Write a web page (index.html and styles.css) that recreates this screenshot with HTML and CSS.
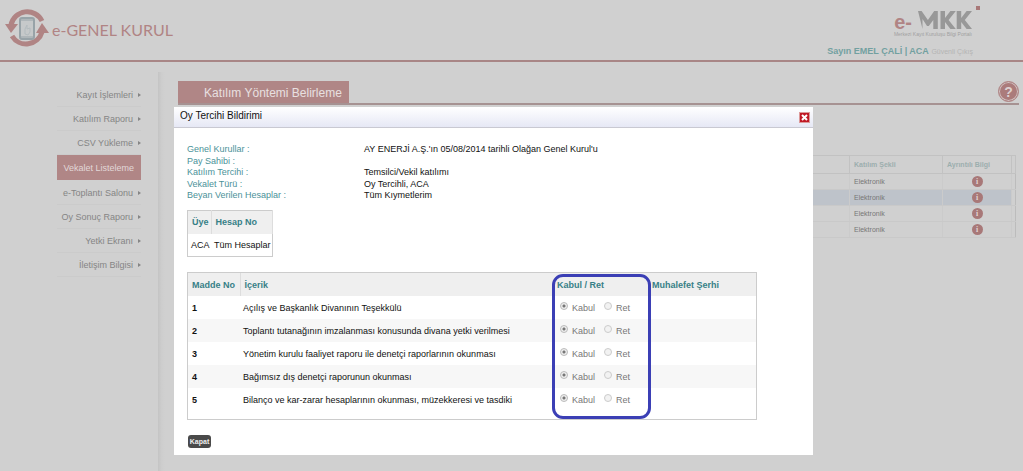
FILE: index.html
```html
<!DOCTYPE html>
<html lang="tr">
<head>
<meta charset="utf-8">
<title>e-Genel Kurul</title>
<link rel="stylesheet" href="styles.css">
</head>
<body>
<header class="topbar">
  <div class="brand">
    <svg class="brand-icon" viewBox="0 0 44 40" aria-hidden="true">
      <path d="M6 17A16.500 16.500 0 0 1 37 13" fill="none" stroke="#b08484" stroke-width="5"/>
      <path d="M0 16H13L6 25Z" fill="#b08484"/>
      <path d="M37 24A16.500 16.500 0 0 1 7 28" fill="none" stroke="#b08484" stroke-width="5"/>
      <path d="M31 25H44L37 15Z" fill="#b08484"/>
      <rect x="15" y="10" width="14" height="21" rx="2" fill="#c6c9ca" stroke="#98a3a8" stroke-width="2"/>
      <path d="M16 12H28M16 29H28" stroke="#98a3a8"/>
      <path d="M20 26V21L22 17V21L25 20V24L23 27Z" fill="none" stroke="#b3bbbe"/>
    </svg>
    <span class="brand-name">e-GENEL KURUL</span>
  </div>
  <div class="account">
    <div class="portal">
      <span class="portal-e">e-</span>
      <div class="portal-mark">
        <svg class="portal-logo" viewBox="0 2 60 18" preserveAspectRatio="none" role="img" aria-label="MKK">
          <path d="M0 2L4 2L11 11L18 2H22V20H17V11L12 17H10L5 10V20Z" fill="#989898"/>
          <path d="M25 2H30V9L36 2H42L34 11L42 20H36L30 13V20H25ZM43 2H48V9L54 2H60L52 11L60 20H54L48 13V20H43Z" fill="#989898"/>
        </svg>
        <span class="portal-sub">Merkezi Kayıt Kuruluşu Bilgi Portalı</span>
      </div>
      <span class="portal-dot"></span>
    </div>
    <div class="user"><b>Sayın EMEL ÇALİ | ACA</b> <a class="logout" href="#">Güvenli Çıkış</a></div>
  </div>
</header>
<div class="page">
  <nav class="menu">
    <a class="menu-item arrow" href="#">Kayıt İşlemleri</a>
    <a class="menu-item arrow" href="#">Katılım Raporu</a>
    <a class="menu-item arrow" href="#">CSV Yükleme</a>
    <a class="menu-item active" href="#">Vekalet Listeleme</a>
    <a class="menu-item arrow" href="#">e-Toplantı Salonu</a>
    <a class="menu-item arrow" href="#">Oy Sonuç Raporu</a>
    <a class="menu-item arrow" href="#">Yetki Ekranı</a>
    <a class="menu-item arrow" href="#">İletişim Bilgisi</a>
  </nav>
  <div class="rule"></div>
  <main class="content">
    <div class="title-row">
      <h1 class="title">Katılım Yöntemi Belirleme</h1>
      <button class="help" aria-label="Yardım">?</button>
    </div>
    <table class="list">
      <thead><tr><th></th><th class="col-type">Katılım Şekli</th><th class="col-info">Ayrıntılı Bilgi</th><th class="col-end"></th></tr></thead>
      <tbody>
        <tr><td></td><td>Elektronik</td><td class="center"><button class="info" aria-label="Bilgi">i</button></td><td class="end"></td></tr>
        <tr class="selected"><td></td><td>Elektronik</td><td class="center"><button class="info" aria-label="Bilgi">i</button></td><td class="end"></td></tr>
        <tr><td></td><td>Elektronik</td><td class="center"><button class="info" aria-label="Bilgi">i</button></td><td class="end"></td></tr>
        <tr><td></td><td>Elektronik</td><td class="center"><button class="info" aria-label="Bilgi">i</button></td><td class="end"></td></tr>
      </tbody>
    </table>
  </main>
</div>
<section class="dialog" role="dialog" aria-labelledby="dialog-title">
  <div class="dialog-head">
    <h2 class="dialog-title" id="dialog-title">Oy Tercihi Bildirimi</h2>
    <button class="close" aria-label="Kapat">
      <svg class="close-icon" viewBox="0 0 11 11"><path d="M3 3L8 8M8 3L3 8" stroke="#fff" stroke-width="2"/></svg>
    </button>
  </div>
  <div class="dialog-body">
    <dl class="facts">
      <dt>Genel Kurullar :</dt><dd>AY ENERJİ A.Ş.'ın 05/08/2014 tarihli Olağan Genel Kurul'u</dd>
      <dt>Pay Sahibi :</dt><dd></dd>
      <dt>Katılım Tercihi :</dt><dd>Temsilci/Vekil katılımı</dd>
      <dt>Vekalet Türü :</dt><dd>Oy Tercihli, ACA</dd>
      <dt>Beyan Verilen Hesaplar :</dt><dd>Tüm Kıymetlerim</dd>
    </dl>
    <table class="grid accounts">
      <thead><tr><th>Üye</th><th>Hesap No</th></tr></thead>
      <tbody><tr><td>ACA</td><td>Tüm Hesaplar</td></tr></tbody>
    </table>
    <div class="votes-wrap">
      <table class="grid votes">
        <thead><tr><th class="col-no">Madde No</th><th>İçerik</th><th class="col-vote">Kabul / Ret</th><th class="col-note">Muhalefet Şerhi</th></tr></thead>
        <tbody>
          <tr><td class="no">1</td><td>Açılış ve Başkanlık Divanının Teşekkülü</td><td><div class="choice"><label class="option"><input type="radio" name="v1" checked disabled>Kabul</label><label class="option"><input type="radio" name="v1" disabled>Ret</label></div></td><td></td></tr>
          <tr><td class="no">2</td><td>Toplantı tutanağının imzalanması konusunda divana yetki verilmesi</td><td><div class="choice"><label class="option"><input type="radio" name="v2" checked disabled>Kabul</label><label class="option"><input type="radio" name="v2" disabled>Ret</label></div></td><td></td></tr>
          <tr><td class="no">3</td><td>Yönetim kurulu faaliyet raporu ile denetçi raporlarının okunması</td><td><div class="choice"><label class="option"><input type="radio" name="v3" checked disabled>Kabul</label><label class="option"><input type="radio" name="v3" disabled>Ret</label></div></td><td></td></tr>
          <tr><td class="no">4</td><td>Bağımsız dış denetçi raporunun okunması</td><td><div class="choice"><label class="option"><input type="radio" name="v4" checked disabled>Kabul</label><label class="option"><input type="radio" name="v4" disabled>Ret</label></div></td><td></td></tr>
          <tr><td class="no">5</td><td>Bilanço ve kar-zarar hesaplarının okunması, müzekkeresi ve tasdiki</td><td><div class="choice"><label class="option"><input type="radio" name="v5" checked disabled>Kabul</label><label class="option"><input type="radio" name="v5" disabled>Ret</label></div></td><td></td></tr>
        </tbody>
      </table>
      <div class="highlight"></div>
    </div>
    <button class="dismiss">Kapat</button>
  </div>
</section>
</body>
</html>
```
FILE: styles.css
```css
* { box-sizing: border-box; }
body {
  margin: 0;
  min-height: 100vh;
  background: #d0d0d0;
  font: 9px/12px "Liberation Sans", Arial, sans-serif;
  color: #111;
}
button { border: 0; padding: 0; font: inherit; cursor: pointer; }
a { text-decoration: none; }

.topbar {
  display: flex;
  justify-content: space-between;
  height: 62px;
  padding-left: 5px;
  border-bottom: 2px solid #a88686;
}
.brand { display: flex; align-items: flex-start; padding-top: 8px; gap: 3px; }
.brand-icon { width: 44px; height: 40px; }
.brand-name { padding-top: 12px; font: 16px/20px Lato, sans-serif; color: #b08484; }
.account {
  display: flex;
  flex-direction: column;
  align-items: flex-end;
  justify-content: space-between;
  padding: 6px 43px 1px 0;
}
.portal { display: flex; align-items: flex-start; }
.portal-e { padding-top: 5px; font: bold 20px/22px "Liberation Sans", sans-serif; color: #b08484; }
.portal-mark { display: flex; flex-direction: column; margin: 5px 4px 0 6px; }
.portal-logo { width: 54px; height: 18px; }
.portal-sub {
  width: 54px;
  display: flex;
  justify-content: flex-end;
  margin-top: 2px;
  white-space: nowrap;
  font-size: 5px;
  line-height: 6px;
  color: #a0a0a0;
}
.portal-dot { width: 4px; height: 4px; background: #a87878; }
.user { margin-right: 7px; font-size: 9px; line-height: 14px; color: #72a0a0; }
.logout { font-size: 7px; color: #b4b4b4; }

.page { display: flex; padding-top: 10px; }
.menu {
  width: 158px;
  padding: 11px 17px 0 57px;
}
.menu-item {
  display: flex;
  align-items: center;
  justify-content: flex-end;
  height: 24px;
  padding-right: 7px;
  border-bottom: 1px solid #cbcbcb;
  color: #858585;
  white-space: nowrap;
}
.menu-item.arrow { padding-right: 0; }
.menu-item.arrow::after {
  content: "";
  margin-left: 5px;
  border: 2px solid transparent;
  border-left: 3px solid #858585;
  border-right: 0;
}
.menu-item.active { height: 25px; margin-bottom: 1px; background: #b08686; border: 0; color: #e2d8d8; }
.rule { width: 7px; min-height: 399px; background: linear-gradient(90deg, #c4c4c4, #cdcdcd 50%, #d0d0d0); }
.content { flex: 1; padding: 9px 4px 0 13px; }
.title-row {
  display: flex;
  justify-content: space-between;
  border-bottom: 2px solid #a69292;
  height: 24px;
}
.title {
  margin: 0;
  padding: 0 7px 0 26px;
  background: #b08686;
  font-size: 12px;
  line-height: 24px;
  font-weight: normal;
  color: #e8e0e0;
}
.help {
  width: 21px;
  height: 21px;
  border: 1px solid #b08686;
  border-radius: 50%;
  background: #ab7b7b;
  box-shadow: inset 0 0 0 1px #d0c0c0;
  font: bold 14px/18px "Liberation Sans", sans-serif;
  color: #ddd0d0;
}
.list {
  width: calc(100% - 3px);
  margin-top: 50px;
  border: 1px solid #bcbcbc;
  border-collapse: collapse;
  table-layout: fixed;
  font: 7px/8px "Liberation Sans", sans-serif;
  color: #777;
}
.list th { height: 18px; padding: 0 4px; border: 1px solid #c2c2c2; text-align: left; color: #9caeae; }
.list td { height: 16px; padding: 0 4px; border-bottom: 1px solid #c9c9c9; border-left: 1px solid #cbcbcb; }
.col-type { width: 93px; }
.col-info { width: 69px; }
.list .col-end { width: 4px; padding: 0; }
.list .end { padding: 0; background: #d0d0d0; }
.list .center { text-align: center; }
.selected { background: #bec3ca; }
.info {
  display: block;
  width: 11px;
  height: 11px;
  margin: 0 auto;
  border-radius: 50%;
  background: #a87878;
  font: bold 8px/11px "Liberation Serif", serif;
  color: #e0d4d4;
}

.dialog {
  position: absolute;
  top: 107px;
  left: 174px;
  right: 210px;
  background: #fff;
}
.dialog-head {
  display: flex;
  justify-content: space-between;
  align-items: center;
  height: 21px;
  padding: 0 3px 0 6px;
  border-bottom: 1px solid #c9c9d2;
  background: linear-gradient(#fff, #e6e8f5);
}
.dialog-title { margin: 0 0 3px; font-size: 10px; line-height: 12px; font-weight: normal; }
.close { width: 11px; height: 11px; background: #c01825; outline: 1px solid #dc9a9a; outline-offset: -1px; }
.close-icon { display: block; width: 11px; height: 11px; }
.dialog-body { padding: 15px 56px 7px 13px; }
.facts { display: grid; grid-template-columns: 177px 1fr; grid-auto-rows: 12px 11px; margin: 0; }
.facts dt { color: #4b9299; }
.facts dd { margin: 0; }
.grid { border: 1px solid #ccc; border-collapse: collapse; }
.grid th {
  height: 23px;
  padding: 0 4px;
  border-right: 1px solid #ddd;
  background: #efefef;
  text-align: left;
  white-space: nowrap;
  color: #378087;
}
.grid td { height: 23px; padding: 0 3px; white-space: nowrap; }
.accounts { margin-top: 9px; }
.accounts th { padding: 0 2px 0 4px; }
.accounts td { padding: 0 1px 0 3px; }
.votes-wrap { position: relative; margin-top: 15px; border: 1px solid #ccc; padding-bottom: 8px; }
.votes { width: 100%; border: 0; table-layout: fixed; }
.votes th { border-right: 0; }
.votes .col-no { width: 52px; border-right: 1px solid #ddd; }
.votes .col-vote { width: 95px; }
.votes .col-note { width: 108px; }
.votes tbody tr:nth-child(even) { background: #f7f7f7; }
.votes .no { font-weight: bold; padding-left: 4px; }
.choice { display: flex; gap: 9px; padding-left: 4px; color: #777; }
.option { display: flex; gap: 4px; }
.option input {
  appearance: none;
  width: 8px;
  height: 8px;
  margin: 0;
  border: 1px solid #ccc;
  border-radius: 50%;
  background: #f2f2f2;
}
.option input:checked { background: radial-gradient(#777 0 1px, #eee 2px); border-color: #bbb; }
.highlight {
  position: absolute;
  top: 1px;
  right: 105px;
  bottom: 0;
  width: 99px;
  border: 3px solid #3b3fb5;
  border-radius: 11px;
  pointer-events: none;
}
.dismiss {
  display: block;
  margin: 15px 0 0 1px;
  width: 23px;
  height: 13px;
  border-radius: 3px;
  background: #4a4a4a;
  font-size: 7px;
  font-weight: bold;
  color: #eee;
}
```
